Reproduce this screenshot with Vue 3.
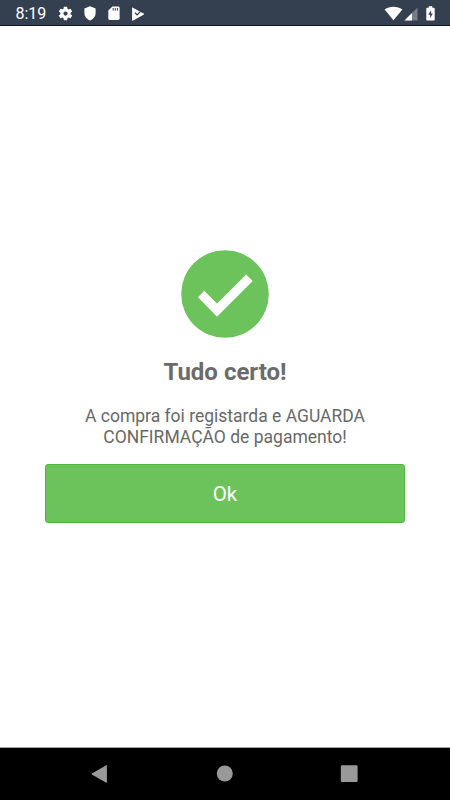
<script setup>
const message = ['A compra foi registarda e AGUARDA', 'CONFIRMAÇÃO de pagamento!']
</script>

<template>
  <div class="screen">
    <header class="status">
      <span class="clock">8:19</span>
      <svg class="gear" width="17" height="17" viewBox="0 0 24 24"><path fill="#fff" d="M19.14 12.94c.04-.3.06-.61.06-.94 0-.32-.02-.64-.07-.94l2.03-1.58c.18-.14.23-.41.12-.61l-1.92-3.32c-.12-.22-.37-.29-.59-.22l-2.39.96c-.5-.38-1.03-.7-1.62-.94L14.4 2.81c-.04-.24-.24-.41-.48-.41h-3.84c-.24 0-.43.17-.47.41l-.36 2.54c-.59.24-1.13.57-1.62.94l-2.39-.96c-.22-.08-.47 0-.59.22L2.74 8.87c-.12.21-.08.47.12.61l2.03 1.58c-.05.3-.09.63-.09.94s.02.64.07.94l-2.03 1.58c-.18.14-.23.41-.12.61l1.92 3.32c.12.22.37.29.59.22l2.39-.96c.5.38 1.03.7 1.62.94l.36 2.54c.05.24.24.41.48.41h3.84c.24 0 .44-.17.47-.41l.36-2.54c.59-.24 1.13-.56 1.62-.94l2.39.96c.22.08.47 0 .59-.22l1.92-3.32c.12-.22.07-.47-.12-.61l-2.01-1.58zM12 15A3 3 0 1 1 12 9a3 3 0 0 1 0 6z" /></svg>
      <svg class="shield" width="12" height="15" viewBox="0 0 12 15"><path fill="#fff" d="M6 .3 11.6 2.6V7c0 3.400-2.400 6.300-5.600 7.500C2.800 13.300.4 10.400.4 7V2.600z" /></svg>
      <svg class="card" width="12" height="15" viewBox="0 0 12 15"><path fill="#fff" d="M4.400.400h5.800c.8 0 1.400.600 1.400 1.400v10.800c0 .8-.6 1.400-1.400 1.400H1.600C.8 14 .3 13.400.3 12.600V4.500z" /><path stroke="#343f50" stroke-width="1" d="M5.200 2v2.600M7.300 2v2.600M9.400 2v2.600" /></svg>
      <svg class="play" width="14" height="14" viewBox="0 0 14 14"><path fill="#fff" d="M1.500.6 12.600 6.600c.6.3.6.9 0 1.200L2.300 13.600c-.6.3-1.200 0-1.200-.600V.9c0-.3.200-.4.4-.3z" /><path fill="none" stroke="#343f50" stroke-width="1.300" d="m4 5.700 2.100 2.200 4.700-4.800" /></svg>
      <span class="spacer"></span>
      <svg class="wifi" width="19" height="15" viewBox="0 0 19 15"><path fill="#fff" d="M.6 3.500C5.800-.3 13.200-.3 18.400 3.500L9.500 14.300z" /></svg>
      <svg class="signal" width="14" height="14" viewBox="0 0 14 14"><path fill="#777e89" d="M13.500.5v13H.5z" /><path fill="#fff" d="M8 6v7.500H.5z" /></svg>
      <svg class="battery" width="9" height="15" viewBox="0 0 9 15"><path fill="#fff" d="M2.700.3h3.600v1.500h1.400c.6 0 1 .4 1 1v10.700c0 .6-.4 1-1 1H1.300c-.6 0-1-.4-1-1V2.800c0-.6.400-1 1-1h1.400z" /><path fill="#343f50" d="M5.100 3.900 2.300 8.700h1.900v3.600l2.600-4.700H5.100z" /></svg>
    </header>

    <main class="content">
      <svg class="success" width="88" height="88" viewBox="0 0 88 88"><circle cx="44" cy="44" r="43.800" fill="#6cc25b" /><path fill="#fff" d="m17 47.200 6.200-6.400L36 53.500l29.200-29.100 6.500 6.500L36 66.800z" /></svg>
      <h1>Tudo certo!</h1>
      <p><span v-for="line in message" :key="line">{{ line }}</span></p>
      <button>Ok</button>
    </main>

    <nav class="nav">
      <svg width="18" height="20" viewBox="0 0 18 20"><path fill="#999" d="M.8 9.600 15.300 1.200c.3-.2.600-.1.600.3v16.900c0 .4-.3.500-.6.300L.8 10.500c-.400-.3-.400-.600 0-.9z" /></svg>
      <svg width="18" height="20" viewBox="0 0 18 20"><circle cx="8.800" cy="9.500" r="8" fill="#999" /></svg>
      <svg width="18" height="20" viewBox="0 0 18 20"><rect x=".8" y="1.200" width="16.800" height="16.700" rx="1.200" fill="#999" /></svg>
    </nav>
  </div>
</template>

<style>
body { margin: 0; background: #fff; }
</style>

<style scoped>
.screen { width: 450px; height: 800px; display: flex; flex-direction: column; font-family: Roboto, sans-serif; background: #fff; overflow: hidden; }
.status { box-sizing: border-box; height: 26px; flex: none; display: flex; align-items: center; background: #343f50; border-bottom: 1px solid #10151d; padding: 2px 15px 0 15.5px; }
.status svg { display: block; flex: none; }
.clock { width: 41.5px; color: #fff; font-size: 16px; line-height: 20px; font-weight: 400; }
.shield { margin-left: 10px; }
.card { margin-left: 12px; }
.play { margin-left: 11px; }
.spacer { flex: 1; }
.wifi { margin-right: 1px; }
.battery { margin-left: 8px; }
.content { flex: 1; display: flex; flex-direction: column; align-items: center; padding: 224px 45px 0; }
.success { display: block; flex: none; }
h1 { margin: 19px 0 0; font-size: 24px; line-height: 30px; font-weight: 700; color: #6b6b6b; white-space: nowrap; }
p { margin: 19px 0 0; font-size: 17.5px; line-height: 21px; color: #686868; text-align: center; white-space: nowrap; }
p span { display: block; }
button { box-sizing: border-box; width: 360px; height: 59px; flex: none; margin: 16px 0 0; padding: 1px 0 0; border: 1px solid #4cb937; border-radius: 3px; background: #6cc25b; color: #fff; font: 400 20.5px/24px Roboto, sans-serif; }
.nav { box-sizing: border-box; height: 53px; flex: none; display: flex; justify-content: space-between; align-items: center; padding: 0 92px 0 91px; background: #000; border-top: 1px solid #a6a6a6; }
.nav svg { display: block; }
</style>
